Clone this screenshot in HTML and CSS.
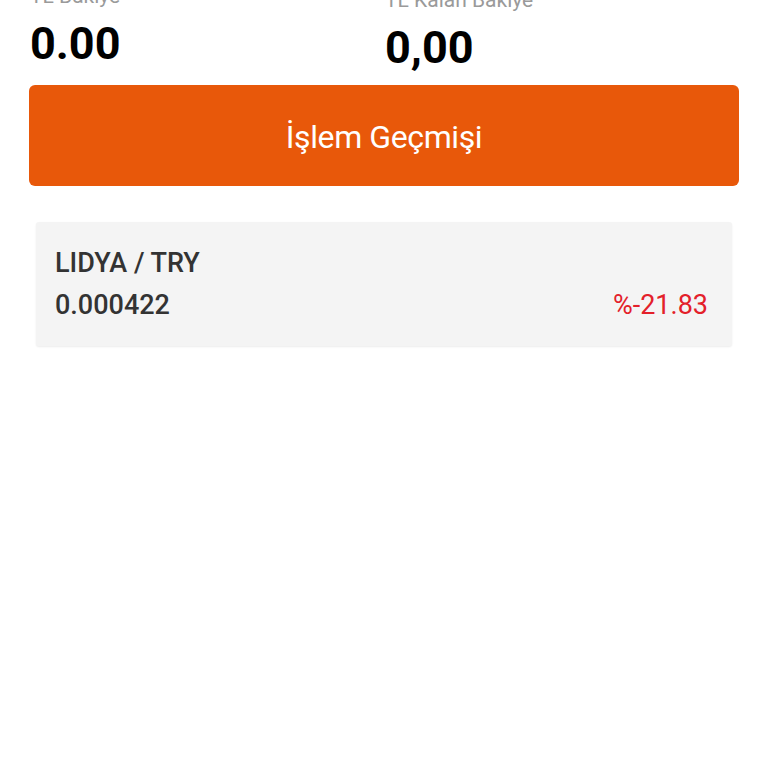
FILE: index.html
```html
<!DOCTYPE html>
<html lang="tr">
<head>
<meta charset="utf-8">
<link rel="stylesheet" href="styles.css">
</head>
<body>
<div class="page">
  <div class="balances">
    <div class="bal">
      <div class="label">TL Bakiye</div>
      <div class="value">0.00</div>
    </div>
    <div class="bal bal-right">
      <div class="label">TL Kalan Bakiye</div>
      <div class="value">0,00</div>
    </div>
  </div>
  <button class="history">İşlem Geçmişi</button>
  <div class="card">
    <div class="pair">LIDYA / TRY</div>
    <div class="row">
      <span class="price">0.000422</span>
      <span class="change">%-21.83</span>
    </div>
  </div>
</div>
</body>
</html>
```
FILE: styles.css
```css
html, body {
  margin: 0;
  padding: 0;
  background: #ffffff;
}
body {
  font-family: Roboto, "Noto Sans", sans-serif;
  width: 768px;
  height: 768px;
  overflow: hidden;
}
.page {
  padding: 0 29px;
  margin-top: -12px;
}
.balances {
  display: flex;
}
.bal {
  width: 356px;
  padding-left: 1px;
}
.bal-right {
  padding-top: 4px;
}
.label {
  font-size: 21px;
  color: #9a9a9a;
  line-height: 16px;
}
.value {
  margin-top: 15px;
  font-size: 45px;
  font-weight: 700;
  color: #000;
  line-height: 50px;
}
.history {
  display: block;
  width: 710px;
  height: 101px;
  margin-top: 12px;
  border: none;
  border-radius: 6px;
  background: #e8580a;
  color: #fff;
  font-family: Roboto, sans-serif;
  font-size: 32px;
  letter-spacing: -0.4px;
  font-weight: 400;
  padding: 2px 0 0 0;
}
.card {
  margin: 36px 7px 0 7px;
  background: #f4f4f4;
  border-radius: 3px;
  box-shadow: 0 1px 2px rgba(0,0,0,0.08);
  padding: 25px 24px 25px 19px;
}
.pair {
  font-size: 27px;
  font-weight: 500;
  color: #333;
  line-height: 32px;
}
.row {
  display: flex;
  justify-content: space-between;
  margin-top: 10px;
  line-height: 32px;
}
.price {
  font-size: 27px;
  font-weight: 500;
  color: #333;
}
.change {
  font-size: 27px;
  font-weight: 400;
  color: #e3202a;
}
```
